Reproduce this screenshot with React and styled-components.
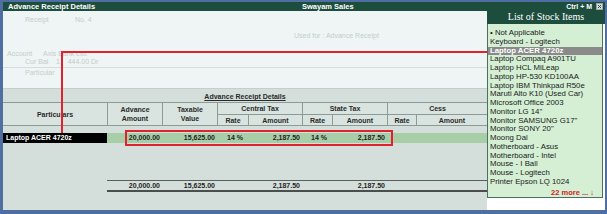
import styled, { createGlobalStyle } from 'styled-components';

const GlobalStyle = createGlobalStyle`
  html, body {
    margin: 0;
    padding: 0;
    background: #ffffff;
  }
  body {
    font-family: 'Liberation Sans', Arial, sans-serif;
  }
`;

const columns = '104px 55px 55px 31px 54px 30px 55px 29px 71px';

const stockItems = [
  '• Not Applicable',
  'Keyboard - Logitech',
  'Laptop ACER 4720z',
  'Laptop Compaq A901TU',
  'Laptop HCL MiLeap',
  'Laptop HP-530 KD100AA',
  'Laptop IBM Thinkpad R50e',
  'Maruti Alto K10 (Used Car)',
  'Microsoft Office 2003',
  'Monitor LG 14"',
  'Monitor SAMSUNG G17"',
  'Monitor SONY 20"',
  'Moong Dal',
  'Motherboard - Asus',
  'Motherboard - Intel',
  'Mouse - I Ball',
  'Mouse - Logitech',
  'Printer Epson LQ 1024',
];

const CloseIcon = () => (
  <svg width="7" height="7" viewBox="0 0 7 7">
    <rect x="0.5" y="0.5" width="6" height="6" fill="#d8dcdc" stroke="#9aa4a4" />
    <path d="M2 2 L5 5 M5 2 L2 5" stroke="#3a4a4a" strokeWidth="1" />
  </svg>
);

const App = () => {
  return (
    <>
      <GlobalStyle />
      <Frame>
        <TitleBar>
          <TitleText>Advance Receipt Details</TitleText>
          <TitleText>Swayam Sales</TitleText>
          <Shortcut>
            Ctrl + M
            <CloseIcon />
          </Shortcut>
        </TitleBar>

        <Body>
          <FadedHeader>
            <FadedRow $top={5} $indent={22}>
              <FadedLabel $width={50}>Receipt</FadedLabel>
              <span>No. 4</span>
            </FadedRow>
            <FadedRow $top={9} $indent={291}>
              <span>Used for : Advance Receipt</span>
            </FadedRow>
            <FadedRow $top={11} $indent={4}>
              <FadedLabel $width={36}>Account</FadedLabel>
              <span>Axis Bank Ltd.</span>
            </FadedRow>
            <FadedRow $top={1} $indent={22}>
              <FadedLabel $width={31}>Cur Bal</FadedLabel>
              <span>1,&nbsp;&nbsp;&nbsp;444.00 Dr</span>
            </FadedRow>
            <FadedRule />
            <FadedRow $top={1} $indent={22}>
              <span>Particular</span>
            </FadedRow>
          </FadedHeader>

          <TablePanel>
            <TableTitle>Advance Receipt Details</TableTitle>
            <HeaderGrid>
              <HeadCell $col="1" $row="1 / span 2">Particulars</HeadCell>
              <HeadCell $col="2" $row="1 / span 2" $divider>
                Advance
                <br />
                Amount
              </HeadCell>
              <HeadCell $col="3" $row="1 / span 2" $divider>
                Taxable
                <br />
                Value
              </HeadCell>
              <HeadCell $col="4 / span 2" $row="1" $divider $under>
                Central Tax
              </HeadCell>
              <HeadCell $col="4" $row="2" $divider>Rate</HeadCell>
              <HeadCell $col="5" $row="2" $divider>Amount</HeadCell>
              <HeadCell $col="6 / span 2" $row="1" $divider $under>
                State Tax
              </HeadCell>
              <HeadCell $col="6" $row="2" $divider>Rate</HeadCell>
              <HeadCell $col="7" $row="2" $divider>Amount</HeadCell>
              <HeadCell $col="8 / span 2" $row="1" $divider $under>
                Cess
              </HeadCell>
              <HeadCell $col="8" $row="2" $divider>Rate</HeadCell>
              <HeadCell $col="9" $row="2" $divider>Amount</HeadCell>
            </HeaderGrid>

            <DataRow>
              <ItemName>Laptop ACER 4720z</ItemName>
              <ValueCell>20,000.00</ValueCell>
              <ValueCell>15,625.00</ValueCell>
              <ValueCell $pad={5}>14 %</ValueCell>
              <ValueCell>2,187.50</ValueCell>
              <ValueCell $pad={5}>14 %</ValueCell>
              <ValueCell>2,187.50</ValueCell>
              <ValueCell />
              <ValueCell />
            </DataRow>

            <TotalRow>
              <span />
              <TotalCell>20,000.00</TotalCell>
              <TotalCell>15,625.00</TotalCell>
              <span />
              <TotalCell>2,187.50</TotalCell>
              <span />
              <TotalCell>2,187.50</TotalCell>
              <span />
              <span />
            </TotalRow>
          </TablePanel>

          <StockPopup>
            <PopupTitle>List of Stock Items</PopupTitle>
            <StockList>
              {stockItems.map((item) => (
                <StockItem key={item} $selected={item === 'Laptop ACER 4720z'}>
                  {item}
                </StockItem>
              ))}
              <MoreLink>22 more ... ↓</MoreLink>
            </StockList>
            <PopupFooter />
          </StockPopup>

          <RedLeader />
          <RedDrop />
          <RedBox />
        </Body>
      </Frame>
    </>
  );
};

const Frame = styled.div`
  width: 607px;
  height: 214px;
  box-sizing: border-box;
  border-style: solid;
  border-color: #4f6fa3;
  border-width: 2px 2px 4px 3px;
  background-color: #eef5f4;
  display: flex;
  flex-direction: column;
  overflow: hidden;
`;

const TitleBar = styled.div`
  height: 9px;
  flex: none;
  background-color: #1c4d3d;
  color: #ffffff;
  display: grid;
  grid-template-columns: 294px 1fr auto;
  align-items: center;
  padding-left: 5px;
  padding-right: 2px;
`;

const TitleText = styled.span`
  font-size: 7.5px;
  font-weight: bold;
  line-height: 9px;
  white-space: nowrap;
`;

const Shortcut = styled(TitleText)`
  display: flex;
  align-items: center;
  gap: 4px;
  font-size: 7px;
`;

const Body = styled.div`
  flex: 1;
  position: relative;
  display: flex;
  flex-direction: column;
`;

const FadedHeader = styled.div`
  height: 77px;
  flex: none;
  display: flex;
  flex-direction: column;
  color: #c3cdcc;
  font-size: 7px;
`;

const FadedRow = styled.div`
  display: flex;
  height: 7px;
  line-height: 7px;
  margin-top: ${(p) => p.$top}px;
  padding-left: ${(p) => p.$indent}px;
  white-space: nowrap;
`;

const FadedLabel = styled.span`
  width: ${(p) => p.$width}px;
`;

const FadedRule = styled.div`
  height: 1px;
  margin-top: 2px;
  width: 484px;
  background-color: #d6dedd;
`;

const TablePanel = styled.div`
  flex: 1;
  width: 484px;
  background-color: #d4dfdb;
  border-top: 1px solid #c4cfcb;
  display: flex;
  flex-direction: column;
`;

const TableTitle = styled.div`
  text-align: center;
  font-size: 7px;
  font-weight: bold;
  color: #2a2a2a;
  text-decoration: underline;
  line-height: 8px;
  margin-top: 4px;
`;

const HeaderGrid = styled.div`
  display: grid;
  grid-template-columns: ${columns};
  grid-template-rows: 12px 10px;
  margin-top: 1px;
  border-top: 1px solid #8d9b96;
  border-bottom: 1px solid #8d9b96;
  background-color: #d9e3df;
`;

const HeadCell = styled.div`
  grid-column: ${(p) => p.$col};
  grid-row: ${(p) => p.$row};
  display: flex;
  align-items: center;
  justify-content: center;
  text-align: center;
  font-size: 7px;
  font-weight: bold;
  color: #2b2b2b;
  line-height: 9px;
  border-left: ${(p) => (p.$divider ? '1px solid #8d9b96' : 'none')};
  border-bottom: ${(p) => (p.$under ? '1px solid #8d9b96' : 'none')};
`;

const DataRow = styled.div`
  display: grid;
  grid-template-columns: ${columns};
  height: 10px;
  margin-top: 7px;
  background-color: #a8cea8;
`;

const ItemName = styled.div`
  background-color: #000000;
  color: #ffffff;
  font-size: 7px;
  font-weight: bold;
  line-height: 10px;
  padding-left: 3px;
  white-space: nowrap;
`;

const ValueCell = styled.div`
  text-align: right;
  padding-right: ${(p) => p.$pad ?? 2}px;
  font-size: 7px;
  font-weight: bold;
  color: #1e1e1e;
  line-height: 10px;
  white-space: nowrap;
`;

const TotalRow = styled.div`
  display: grid;
  grid-template-columns: ${columns};
  margin-top: 38px;
  height: 9px;
  position: relative;

  &::before,
  &::after {
    content: '';
    position: absolute;
    left: 104px;
    right: 0;
  }
  &::before {
    top: -1px;
    height: 1px;
    background-color: #5a5f5e;
  }
  &::after {
    bottom: -2px;
    height: 2px;
    background-color: #4a4f4e;
  }
`;

const TotalCell = styled(ValueCell)`
  line-height: 9px;
`;

const StockPopup = styled.div`
  position: absolute;
  top: 0;
  left: 484px;
  width: 118px;
  bottom: 0;
  display: flex;
  flex-direction: column;
  background-color: #ffffff;
`;

const PopupTitle = styled.div`
  height: 13px;
  flex: none;
  background-color: #1c4d3d;
  color: #ffffff;
  font-family: 'Liberation Serif', 'Times New Roman', serif;
  font-size: 10px;
  line-height: 12px;
  text-align: center;
`;

const StockList = styled.div`
  flex: 1;
  margin-right: 2px;
  background-color: #d4efd4;
  border: 1px solid #4e6e5e;
  border-top: none;
  padding-top: 5px;
  display: flex;
  flex-direction: column;
`;

const StockItem = styled.div`
  height: 8.76px;
  line-height: 8.76px;
  padding-left: 2px;
  font-size: 7.8px;
  white-space: nowrap;
  color: ${(p) => (p.$selected ? '#ffffff' : '#1a1a1a')};
  font-weight: ${(p) => (p.$selected ? 'bold' : 'normal')};
  background-color: ${(p) => (p.$selected ? '#8a8a8a' : 'transparent')};
`;

const MoreLink = styled.div`
  text-align: right;
  padding-right: 8px;
  margin-top: 1px;
  font-size: 7.5px;
  font-weight: bold;
  color: #d21a1a;
  line-height: 9px;
`;

const PopupFooter = styled.div`
  height: 12px;
  flex: none;
  background-color: #ffffff;
`;

const RedLeader = styled.div`
  position: absolute;
  top: 40px;
  left: 58px;
  width: 426px;
  height: 2px;
  background-color: #e0222c;
`;

const RedDrop = styled.div`
  position: absolute;
  top: 40px;
  left: 58px;
  width: 2px;
  height: 82px;
  background-color: #e0222c;
`;

const RedBox = styled.div`
  position: absolute;
  top: 119px;
  left: 122px;
  width: 268px;
  height: 16px;
  box-sizing: border-box;
  border: 2px solid #e0222c;
`;

export default App;
